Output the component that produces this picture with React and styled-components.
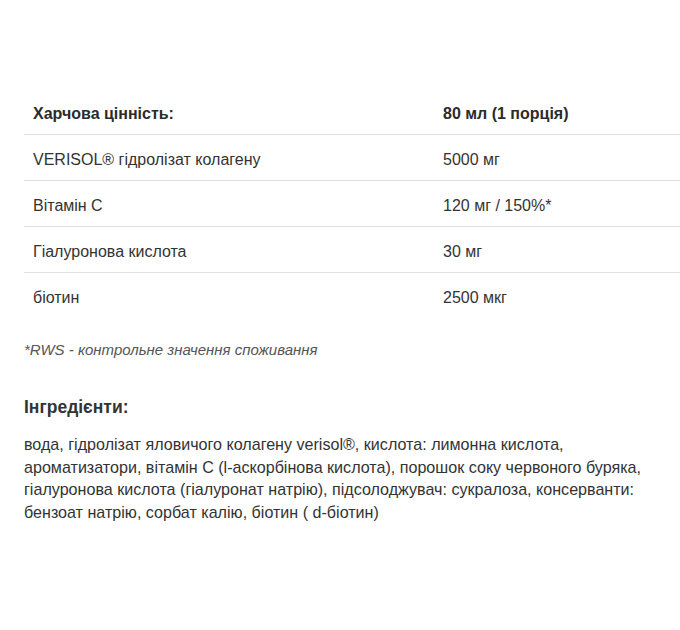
import React from "react";
import styled, { createGlobalStyle } from "styled-components";

const GlobalStyle = createGlobalStyle`
  html, body {
    margin: 0;
    padding: 0;
    background: #fff;
  }
  body {
    font-family: "Liberation Sans", Arial, sans-serif;
    color: #333;
  }
`;

const Page = styled.div`
  padding: 89px 0 40px 24px;
`;

const Table = styled.table`
  width: 100%;
  border-collapse: collapse;
  font-size: 16px;
`;

const Row = styled.tr`
  border-bottom: ${(p) => (p.$last ? "none" : "1px solid #dee2e6")};
`;

const Cell = styled.td`
  height: 41px;
  padding: 4px 9px 0;
  vertical-align: middle;
  font-weight: ${(p) => (p.$head ? 700 : 400)};
  color: ${(p) => (p.$head ? "#2b2b2b" : "#333")};
  width: ${(p) => p.$w || "auto"};
`;

const Note = styled.p`
  margin: 23px 0 0;
  font-style: italic;
  font-size: 15px;
  line-height: 17px;
  color: #555;
`;

const Heading = styled.h3`
  margin: 39px 0 0;
  font-size: 17.5px;
  line-height: 20px;
  font-weight: 700;
  color: #333;
`;

const Text = styled.p`
  margin: 16px 24px 0 0;
  font-size: 16.1px;
  line-height: 22.6px;
  color: #333;
`;

const rows = [
  ["VERISOL® гідролізат колагену", "5000 мг"],
  ["Вітамін С", "120 мг / 150%*"],
  ["Гіалуронова кислота", "30 мг"],
  ["біотин", "2500 мкг"],
];

const App = () => (
  <Page>
    <GlobalStyle />
    <Table>
      <tbody>
        <Row>
          <Cell $head $w="392px">Харчова цінність:</Cell>
          <Cell $head>80 мл (1 порція)</Cell>
        </Row>
        {rows.map(([name, value], i) => (
          <Row key={name} $last={i === rows.length - 1}>
            <Cell>{name}</Cell>
            <Cell>{value}</Cell>
          </Row>
        ))}
      </tbody>
    </Table>
    <Note>*RWS - контрольне значення споживання</Note>
    <Heading>Інгредієнти:</Heading>
    <Text>
      вода, гідролізат яловичого колагену verisol®, кислота: лимонна кислота,
      ароматизатори, вітамін С (l-аскорбінова кислота), порошок соку червоного
      буряка, гіалуронова кислота (гіалуронат натрію), підсолоджувач:
      сукралоза, консерванти: бензоат натрію, сорбат калію, біотин ( d-біотин)
    </Text>
  </Page>
);

export default App;
